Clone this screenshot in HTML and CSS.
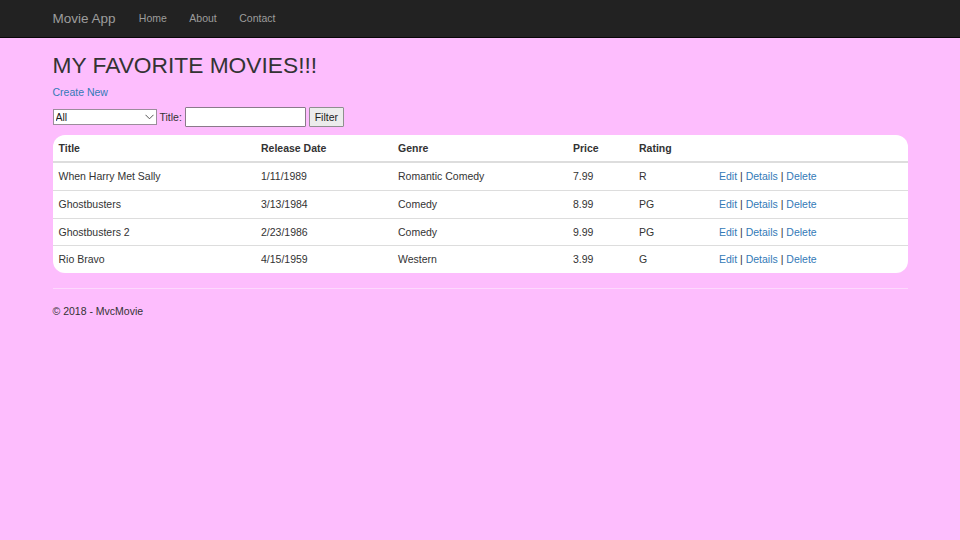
FILE: index.html
```html
<!DOCTYPE html>
<html lang="en">
<head>
<meta charset="utf-8">
<title>Index - Movie App</title>
<link rel="stylesheet" href="styles.css">
</head>
<body>
<nav class="navbar">
  <div class="container nav-inner">
    <a class="brand" href="#">Movie App</a>
    <ul class="nav">
      <li><a href="#">Home</a></li>
      <li><a href="#">About</a></li>
      <li><a href="#">Contact</a></li>
    </ul>
  </div>
</nav>
<main class="container body-content">
  <h1 class="page-title">MY FAVORITE MOVIES!!!</h1>
  <p class="create"><a href="#">Create New</a></p>
  <form class="filter">
    <span class="select-wrap">
      <select class="genre"><option>All</option></select>
      <svg class="chev" width="9" height="6" viewBox="0 0 9 6"><path d="M0.5 0.8 L4.5 4.8 L8.5 0.8" fill="none" stroke="#555" stroke-width="1"/></svg>
    </span>
    <label class="lbl">Title:</label>
    <input class="search" type="text">
    <button class="btn" type="button">Filter</button>
  </form>
  <table class="movies">
    <thead>
      <tr>
        <th class="c-title">Title</th>
        <th class="c-date">Release Date</th>
        <th class="c-genre">Genre</th>
        <th class="c-price">Price</th>
        <th class="c-rating">Rating</th>
        <th class="c-act"></th>
      </tr>
    </thead>
    <tbody>
      <tr><td>When Harry Met Sally</td><td>1/11/1989</td><td>Romantic Comedy</td><td>7.99</td><td>R</td><td><a href="#">Edit</a> | <a href="#">Details</a> | <a href="#">Delete</a></td></tr>
      <tr><td>Ghostbusters</td><td>3/13/1984</td><td>Comedy</td><td>8.99</td><td>PG</td><td><a href="#">Edit</a> | <a href="#">Details</a> | <a href="#">Delete</a></td></tr>
      <tr><td>Ghostbusters 2</td><td>2/23/1986</td><td>Comedy</td><td>9.99</td><td>PG</td><td><a href="#">Edit</a> | <a href="#">Details</a> | <a href="#">Delete</a></td></tr>
      <tr><td>Rio Bravo</td><td>4/15/1959</td><td>Western</td><td>3.99</td><td>G</td><td><a href="#">Edit</a> | <a href="#">Details</a> | <a href="#">Delete</a></td></tr>
    </tbody>
  </table>
  <hr class="rule">
  <footer class="footer">
    <p>&copy; 2018 - MvcMovie</p>
  </footer>
</main>
</body>
</html>
```
FILE: styles.css
```css
* { box-sizing: border-box; }
html, body { margin: 0; padding: 0; }
body {
  background: #fdbdfd;
  font-family: "Liberation Sans", Arial, sans-serif;
  font-size: 10.5px;
  line-height: 15px;
  color: #333;
}
a { color: #337ab7; text-decoration: none; }
.container { width: 855px; margin: 0 auto; }

.navbar { background: #222; height: 38px; border-bottom: 1px solid #080808; }
.nav-inner { display: flex; align-items: center; height: 37px; }
.brand { color: #9d9d9d; font-size: 13.5px; line-height: 18px; padding-right: 12px; }
.nav { list-style: none; margin: 0; padding: 0; display: flex; }
.nav a { display: block; color: #9d9d9d; padding: 0 11.25px; font-size: 10.5px; }

.page-title {
  font-size: 22.75px;
  font-weight: 500;
  line-height: 25px;
  margin: 15px 0 7px;
  color: #333;
}
.create { margin: 0 0 8px; }

.filter { display: flex; align-items: center; height: 20px; margin: -1px 0 8px; }
.select-wrap { position: relative; display: inline-flex; }
.genre {
  appearance: none;
  -webkit-appearance: none;
  width: 104px;
  height: 16px;
  border: 1px solid #9b8d9b;
  background: #fff;
  font: 10.5px "Liberation Sans", Arial, sans-serif;
  color: #222;
  padding: 0 0 0 2px;
  border-radius: 0;
  margin: 0;
}
.chev { position: absolute; right: 3px; top: 5px; }
.lbl { margin: 0 3px 0 3px; }
.search {
  width: 121px;
  height: 20px;
  border: 1px solid #8a7a8a;
  border-radius: 1px;
  background: #fff;
  margin: 0 3px 0 0;
  padding: 0 2px;
}
.btn {
  height: 20px;
  width: 35px;
  padding: 0;
  border: 1px solid #8f8f8f;
  border-radius: 1px;
  background: #ececec;
  font: 10.5px "Liberation Sans", Arial, sans-serif;
  color: #222;
}

.movies {
  width: 855px;
  table-layout: fixed;
  border-collapse: separate;
  border-spacing: 0;
  background: #fff;
  border-radius: 12px;
  overflow: hidden;
  margin: 0 0 15px;
}
.movies th, .movies td {
  text-align: left;
  padding: 6px 6px 5.75px;
  line-height: 15px;
  vertical-align: top;
}
.movies th { font-weight: bold; border-bottom: 2px solid #ddd; padding-bottom: 5px; }
.movies tbody tr + tr td { border-top: 1px solid #ddd; }
.c-title { width: 202.5px; }
.c-date { width: 137px; }
.c-genre { width: 175px; }
.c-price { width: 66px; }
.c-rating { width: 80px; }
.c-act { width: 194.5px; }

.rule { border: 0; border-top: 1px solid #fdd8fd; margin: 0 0 15px; }
.footer p { margin: 0 0 10px; }
```
